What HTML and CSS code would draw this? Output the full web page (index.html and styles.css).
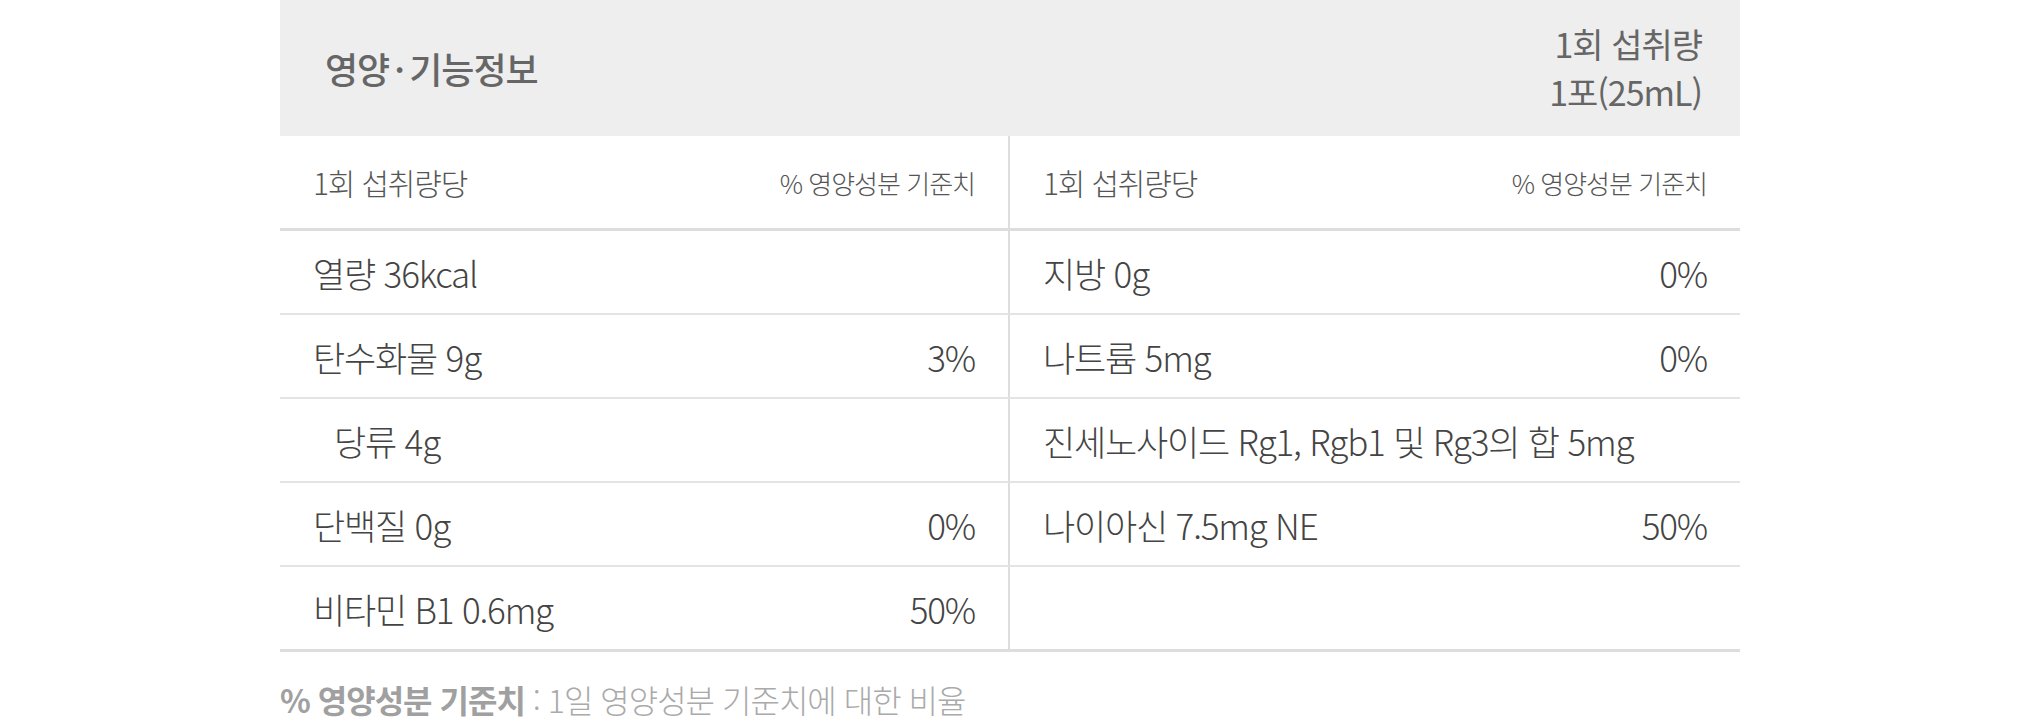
FILE: index.html
```html
<!DOCTYPE html>
<html lang="ko">
<head>
<meta charset="utf-8">
<link rel="stylesheet" href="styles.css">
</head>
<body>
<div class="nutri">
  <div class="nutri-head">
    <h2 class="nutri-title">영양 · 기능정보</h2>
    <div class="nutri-serving">
      <p>1회 섭취량</p>
      <p>1포(25mL)</p>
    </div>
  </div>
  <div class="nutri-grid">
    <div class="cell col-head left"><span>1회 섭취량당</span><span class="dv">% 영양성분 기준치</span></div>
    <div class="cell col-head"><span>1회 섭취량당</span><span class="dv">% 영양성분 기준치</span></div>

    <div class="cell left"><span>열량 36kcal</span><span></span></div>
    <div class="cell"><span>지방 0g</span><span>0%</span></div>

    <div class="cell left"><span>탄수화물 9g</span><span>3%</span></div>
    <div class="cell"><span>나트륨 5mg</span><span>0%</span></div>

    <div class="cell left"><span class="sub">당류 4g</span><span></span></div>
    <div class="cell"><span>진세노사이드 Rg1, Rgb1 및 Rg3의 합 5mg</span><span></span></div>

    <div class="cell left"><span>단백질 0g</span><span>0%</span></div>
    <div class="cell"><span>나이아신 7.5mg NE</span><span>50%</span></div>

    <div class="cell left last"><span>비타민 B1 0.6mg</span><span>50%</span></div>
    <div class="cell last"><span></span><span></span></div>
  </div>
  <p class="nutri-note"><strong>% 영양성분 기준치</strong> : 1일 영양성분 기준치에 대한 비율</p>
</div>
</body>
</html>
```

FILE: styles.css
```css
* { box-sizing: border-box; }
html, body { margin: 0; padding: 0; background: #fff; }
body {
  font-family: "Noto Sans CJK KR", "Noto Sans", sans-serif;
  color: #444;
}
.nutri {
  width: 1460px;
  margin: 0 auto;
}
.nutri-head {
  height: 136px;
  background: #eeeeee;
  display: flex;
  justify-content: space-between;
  align-items: center;
  padding: 0 38px 0 45px;
}
.nutri-title {
  margin: 0;
  font-size: 36px;
  font-weight: 500;
  color: #666;
  letter-spacing: -1px;
  word-spacing: -4px;
}
.nutri-serving {
  text-align: right;
  color: #666;
  font-size: 34px;
  font-weight: 400;
  letter-spacing: -1px;
}
.nutri-serving p { margin: 0; line-height: 48px; }
.nutri-grid {
  display: grid;
  grid-template-columns: 730px 730px;
}
.cell {
  display: flex;
  justify-content: space-between;
  align-items: center;
  height: 84px;
  padding: 0 33px;
  border-bottom: 2px solid #e4e4e4;
  font-size: 35px;
  font-weight: 300;
  letter-spacing: -1.2px;
  color: #444;
}
.cell.left { border-right: 2px solid #dddddd; }
.cell.col-head {
  height: 95px;
  font-size: 30px;
  color: #555;
  border-bottom: 3px solid #dddddd;
}
.cell.col-head .dv {
  font-size: 26px;
  letter-spacing: -1px;
}
.cell.last { border-bottom: 3px solid #dddddd; height: 85px; }
.sub { padding-left: 21px; }
.nutri-note {
  margin: 24px 0 0;
  font-size: 32px;
  font-weight: 300;
  color: #aaa;
  letter-spacing: -1px;
}
.nutri-note strong { font-weight: 700; color: #a0a0a0; }
```
